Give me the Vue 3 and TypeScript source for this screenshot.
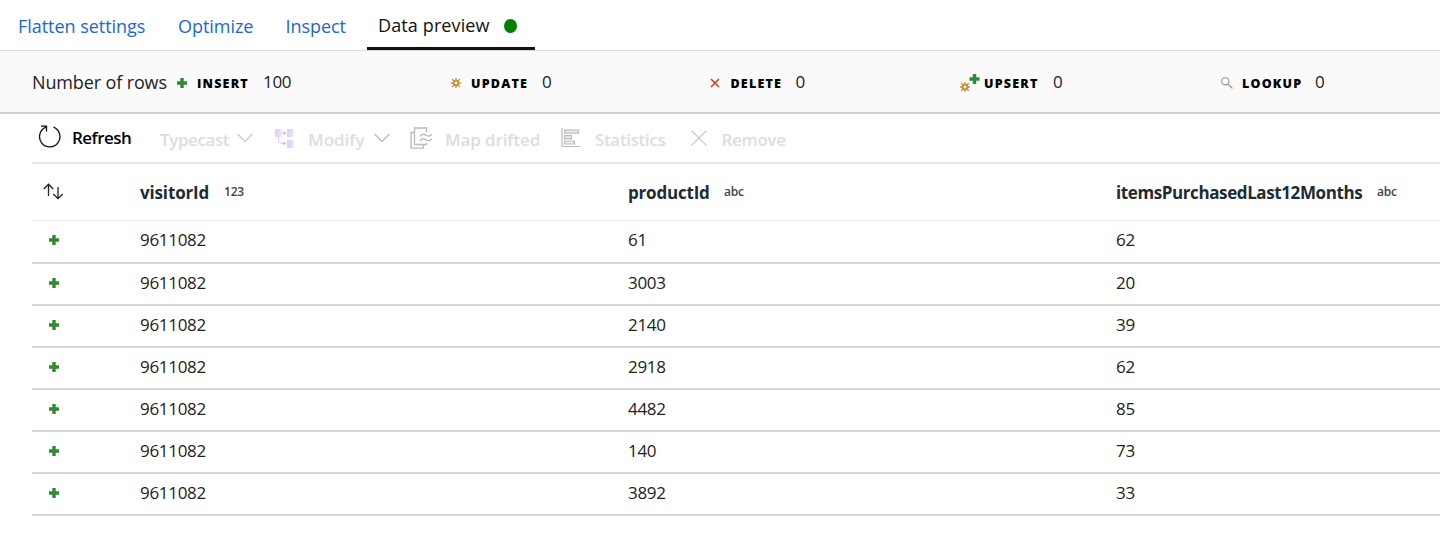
<script setup lang="ts">
import { computed } from 'vue'

interface Count { key: string; label: string; value: number }
interface Column { name: string; type: string; key: string }

const tabs = ['Flatten settings', 'Optimize', 'Inspect', 'Data preview']
const counts: Count[] = [
  { key: 'insert', label: 'INSERT', value: 100 },
  { key: 'update', label: 'UPDATE', value: 0 },
  { key: 'delete', label: 'DELETE', value: 0 },
  { key: 'upsert', label: 'UPSERT', value: 0 },
  { key: 'lookup', label: 'LOOKUP', value: 0 },
]
const columns: Column[] = [
  { name: 'visitorId', type: '123', key: 'visitor' },
  { name: 'productId', type: 'abc', key: 'product' },
  { name: 'itemsPurchasedLast12Months', type: 'abc', key: 'items' },
]
const products: [number, number][] = [
  [61, 62], [3003, 20], [2140, 39], [2918, 62], [4482, 85], [140, 73], [3892, 33],
]
const rows = computed(() => products.map(([product, items]) => [9611082, product, items]))
</script>

<template>
  <div class="panel">
    <nav class="tabs">
      <a v-for="(tab, i) in tabs" :key="tab" :class="['tab', 'tab-' + i, { active: i === 3 }]">
        <span>{{ tab }}</span><i v-if="i === 3" class="status"></i>
      </a>
    </nav>

    <section class="summary">
      <span class="title">Number of rows</span>
      <div v-for="c in counts" :key="c.key" :class="['count', c.key]">
        <svg v-if="c.key === 'insert'" class="mark" width="10" height="10" viewBox="0 0 10 10"><path d="M3.300 0h3.400v3.300H10v3.400H6.700V10H3.300V6.700H0V3.300h3.300z" fill="#2f8a30" /></svg>
        <svg v-else-if="c.key === 'update'" class="mark" width="10" height="10" viewBox="0 0 10 10" fill="none" stroke="#c98628"><circle cx="5" cy="5" r="2.200" stroke-width="1.500" /><path d="M5 0v2.500M5 7.500V10M0 5h2.500M7.500 5H10M1.300 1.300l2 2M6.700 6.700l2 2M8.700 1.300l-2 2M3.300 6.700l-2 2" stroke-width="1.300" /></svg>
        <svg v-else-if="c.key === 'delete'" class="mark" width="10" height="10" viewBox="0 0 10 10"><path d="M1 1l8 8M9 1L1 9" stroke="#da3316" stroke-width="1.500" /></svg>
        <svg v-else-if="c.key === 'upsert'" class="mark" width="20" height="20" viewBox="0 0 20 20" fill="none">
          <path d="M12.800 1h3.400v3.300h3.300v3.400h-3.300V11h-3.400V7.700H9.500V4.300h3.300z" fill="#2f8a30" />
          <g stroke="#c98628"><circle cx="5" cy="14" r="2.200" stroke-width="1.500" /><path d="M5 9v2.500M5 16.500V19M0 14h2.500M7.500 14H10M1.300 10.300l2 2M6.700 15.700l2 2M8.700 10.300l-2 2M3.300 15.700l-2 2" stroke-width="1.300" /></g>
        </svg>
        <svg v-else class="mark" width="12" height="12" viewBox="0 0 12 12" fill="none" stroke="#999"><circle cx="4.300" cy="4.300" r="3.600" stroke-width="1.100" /><path d="M7 7l4.500 4.500" stroke-width="1.300" /></svg>
        <b class="label">{{ c.label }}</b>
        <span class="value">{{ c.value }}</span>
      </div>
    </section>

    <div class="data">
      <div class="toolbar">
        <button class="tool refresh">
          <svg width="24" height="24" viewBox="0 0 24 24" fill="none" stroke="#111" stroke-width="1.300"><path d="M15.500 3.200A10.200 10.200 0 1 1 8 3.200M3 2.200H8.500V7.500" /></svg>
          <span>Refresh</span>
        </button>
        <button class="tool typecast">
          <span>Typecast</span>
          <svg width="16" height="10" viewBox="0 0 16 10" fill="none" stroke="#c8c8c8" stroke-width="1.200"><path d="M.5 1L8 8.500 15.500 1" /></svg>
        </button>
        <button class="tool modify">
          <svg width="19" height="20" viewBox="0 0 19 20"><defs><linearGradient id="violet" x1="0" x2="1"><stop stop-color="#ddcdf5" /><stop offset="1" stop-color="#ebe1fa" /></linearGradient></defs><g fill="url(#violet)"><rect x="0" y="1" width="6.500" height="8" rx="1" /><rect x="12" y="1" width="6.500" height="8" rx="1" /><rect x="12" y="12" width="6.500" height="8" rx="1" /></g><path d="M6.500 5H9M3.500 9v3q0 3.500 3.500 3.500h2" fill="none" stroke="#d6c5f2" stroke-width="1" /><path d="M8.500 3l3 2-3 2zM8.500 13.500l3 2-3 2z" fill="#c9b5ee" /></svg>
          <span>Modify</span>
          <svg width="16" height="10" viewBox="0 0 16 10" fill="none" stroke="#b8b8b8" stroke-width="1.200"><path d="M.5 1L8 8.500 15.500 1" /></svg>
        </button>
        <button class="tool drifted">
          <svg width="23" height="22" viewBox="0 0 23 22" fill="none" stroke="#bbb" stroke-width="1.300"><path d="M16.500 5V1H4.500v16.500h12v-2M4.500 5.500H1V21.200h12.500V18" /><path d="M10 9.500q2.800-3.600 5.800-1.300t6-1M10 14q2.800-3.600 5.800-1.300t6-1" /></svg>
          <span>Map drifted</span>
        </button>
        <button class="tool statistics">
          <svg width="20" height="20" viewBox="0 0 20 20" fill="#eee" stroke="#bdbdbd" stroke-width="1.200"><path d="M1 0v18.500h18.500" fill="none" /><path d="M3.500 2.100h14v3h-14zM3.500 7.600h7v3h-7zM3.500 13h10v3h-10z" /></svg>
          <span>Statistics</span>
        </button>
        <button class="tool remove">
          <svg width="16" height="16" viewBox="0 0 16 16" stroke="#c8c8c8" stroke-width="1.100"><path d="M.5.5l15 15M15.500.5l-15 15" /></svg>
          <span>Remove</span>
        </button>
      </div>

      <div class="row head">
        <div class="cell"><svg class="sort" width="21" height="17" viewBox="0 0 21 17" fill="none" stroke="#222" stroke-width="1.300"><path d="M5.500 13V1.200M.8 6l4.700-4.800L10.200 6M15 4v11.700M10.300 11l4.700 4.700 4.700-4.700" /></svg></div>
        <div v-for="col in columns" :key="col.key" :class="['cell', col.key]">
          <b>{{ col.name }}</b><small>{{ col.type }}</small>
        </div>
      </div>
      <div v-for="(row, i) in rows" :key="i" class="row">
        <div class="cell"><svg class="plus" width="10" height="10" viewBox="0 0 10 10"><path d="M3.300 0h3.400v3.300H10v3.400H6.700V10H3.300V6.700H0V3.300h3.300z" fill="#2f8a30" /></svg></div>
        <div v-for="(value, j) in row" :key="j" class="cell">{{ value }}</div>
      </div>
    </div>
  </div>
</template>

<style>
body { margin: 0; background: #fff; overflow: hidden; }
</style>

<style scoped>
.panel { width: 1440px; height: 534px; overflow: hidden; background: #fff; color: #222; font-family: "Open Sans", "Noto Sans", sans-serif; font-size: 17px; white-space: nowrap; }
.tabs { box-sizing: border-box; display: flex; height: 51px; padding-left: 18px; border-bottom: 1px solid #dcdcdc; font-size: 18px; }
.tab { box-sizing: border-box; height: 50px; line-height: 52px; color: #1a66dc; }
.tab-0 { width: 160px; letter-spacing: -.04px; }
.tab-1 { width: 107.500px; letter-spacing: -.05px; }
.tab-2 { width: 81.500px; letter-spacing: -.05px; }
.active { display: flex; align-items: center; width: 168px; padding-left: 11px; color: #111; border-bottom: 3px solid #111; letter-spacing: .12px; }
.active span { width: 126px; padding-top: 3px; }
.status { width: 13px; height: 14px; margin-top: 4px; border-radius: 50%; background: #008000; }
.summary { box-sizing: border-box; display: flex; align-items: center; height: 63px; padding: 0 0 0 32px; background: #fafafa; border-bottom: 2px solid #d0d0d0; }
.title { width: 145px; font-size: 18px; line-height: 24px; letter-spacing: -.13px; padding-top: 1px; }
.count { display: flex; align-items: center; height: 24px; }
.mark { flex: none; margin-top: 3px; }
.label { font-size: 12.500px; font-weight: 800; color: #000; letter-spacing: 1.200px; margin-top: 3px; }
.value { font-size: 17px; letter-spacing: -.3px; }
.insert { width: 274px; } .insert .label { width: 66px; margin-left: 10px; }
.update { width: 259px; } .update .label { width: 71px; margin-left: 10px; }
.delete { width: 249.500px; } .delete .label { width: 65px; margin-left: 10.500px; }
.upsert { width: 261.500px; } .upsert .label { width: 69px; margin-left: 4.500px; }
.lookup .label { width: 73px; margin-left: 9px; }
.data { margin-left: 32px; }
.toolbar { box-sizing: border-box; display: flex; align-items: center; height: 50px; border-bottom: 2px solid #e6e6e6; }
.tool { display: flex; align-items: center; flex: none; height: 48px; margin: 0; padding: 0; border: 0; background: none; font: 600 17px/24px "Open Sans", "Noto Sans", sans-serif; color: #ddd; text-align: left; }
.tool svg { flex: none; }
.tool span { padding-top: 3px; letter-spacing: -.3px; }
.refresh { width: 122px; padding-left: 6px; color: #000; }
.refresh svg { margin-bottom: 5px; } .refresh span { margin-left: 10px; padding-top: 0; letter-spacing: -.55px; }
.typecast { width: 121px; padding-left: 6px; } .typecast span { width: 77px; letter-spacing: -.4px; }
.modify { width: 135px; } .modify span { width: 66px; margin-left: 14px; letter-spacing: 0; }
.drifted { width: 151px; } .drifted span { margin-left: 12px; letter-spacing: -.12px; }
.statistics { width: 129.500px; } .statistics span { margin-left: 14px; letter-spacing: -.35px; }
.remove span { margin-left: 15px; }
.row { box-sizing: border-box; display: grid; grid-template-columns: 108px 488px 488px 324px; align-items: center; height: 42px; padding-bottom: 2px; border-bottom: 2px solid #d6d6d6; line-height: 24px; letter-spacing: -.3px; }
.head { height: 57px; padding-bottom: 0; border-bottom: 1px solid #ececec; color: #212b35; }
.head + .row { height: 43px; padding-bottom: 3px; }
.cell { display: flex; align-items: center; }
.cell b { padding-top: 2px; font-weight: 700; }
.cell small { font-size: 12px; font-weight: 600; letter-spacing: -.2px; color: #444; }
.visitor b { width: 84px; letter-spacing: -.15px; } .product b { width: 96px; letter-spacing: -.2px; } .items b { width: 261px; letter-spacing: -.4px; }
.sort { margin-left: 11px; margin-bottom: 2px; } .plus { margin-left: 17px; margin-bottom: 1px; }
</style>
